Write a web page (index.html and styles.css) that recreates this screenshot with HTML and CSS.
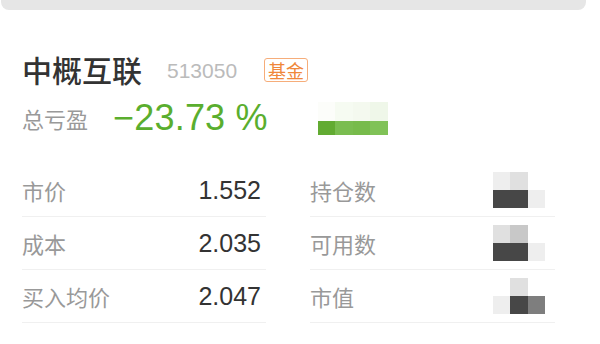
FILE: index.html
```html
<!DOCTYPE html>
<html lang="zh-CN">
  <head>
    <meta charset="UTF-8" />
    <meta name="viewport" content="width=device-width, initial-scale=1.0" />
    <title>中概互联 持仓</title>
    <link rel="stylesheet" href="styles.css">
  </head>
  <body>
    <div class="top-bar"></div>

    <div class="card">
      <!-- name, code and tag -->
      <div class="header">
        <span class="name">中概互联</span>
        <span class="code">513050</span>
        <span class="tag">基金</span>
      </div>

      <!-- total profit / loss -->
      <div class="profit">
        <span class="profit-label">总亏盈</span>
        <span class="profit-value">−23.73 %</span>
        <div class="mosaic green">
          <i class="g1"></i><i class="g2"></i><i class="g3"></i><i class="g4"></i>
          <i class="g5"></i><i class="g6"></i><i class="g7"></i><i class="g8"></i>
        </div>
      </div>

      <div class="table">
        <div class="column">
          <div class="row">
            <span class="label">市价</span>
            <span class="value">1.552</span>
          </div>
          <div class="row">
            <span class="label">成本</span>
            <span class="value">2.035</span>
          </div>
          <div class="row">
            <span class="label">买入均价</span>
            <span class="value">2.047</span>
          </div>
        </div>

        <div class="column">
          <div class="row">
            <span class="label">持仓数</span>
            <div class="mosaic gray">
              <i class="c1"></i><i class="c2"></i><i class="c0"></i>
              <i class="c9"></i><i class="c9"></i><i class="c1"></i>
            </div>
          </div>
          <div class="row">
            <span class="label">可用数</span>
            <div class="mosaic gray">
              <i class="c2"></i><i class="c3"></i><i class="c0"></i>
              <i class="c9"></i><i class="c9"></i><i class="c1"></i>
            </div>
          </div>
          <div class="row">
            <span class="label">市值</span>
            <div class="mosaic gray">
              <i class="c0"></i><i class="c2"></i><i class="c0"></i>
              <i class="c1"></i><i class="c9"></i><i class="c5"></i>
            </div>
          </div>
        </div>
      </div>
    </div>
  </body>
</html>
```

FILE: styles.css
```css
body {
  margin: 0;
  background: #fff;
  color: #333;
  font-family: "Liberation Sans", "Noto Sans CJK SC", sans-serif;
}

.top-bar {
  height: 10px;
  margin: 0 14px 0 1px;
  background: #e6e6e6;
  border-radius: 0 0 8px 8px;
}

.card {
  padding: 0 0 0 22px;
}

/* Header */
.header {
  display: flex;
  align-items: center;
  height: 36px;
  margin-top: 41px;
}

.name {
  font-family: "Noto Sans CJK SC", sans-serif;
  font-size: 30px;
  font-weight: 500;
  color: #333;
  line-height: 36px;
}

.code {
  margin-left: 25px;
  font-size: 21px;
  color: #bbb;
  position: relative;
  top: 2px;
}

.tag {
  margin-left: 27px;
  padding: 0 3px;
  height: 22px;
  line-height: 22px;
  border: 1px solid #f6ad7a;
  border-radius: 3px;
  color: #f0873a;
  font-family: "Noto Sans CJK SC", sans-serif;
  font-size: 18px;
  position: relative;
  top: 1px;
}

/* Profit */
.profit {
  display: flex;
  align-items: center;
  height: 36px;
  margin-top: 13px;
}

.profit-label {
  font-family: "Noto Sans CJK SC", sans-serif;
  font-size: 22px;
  color: #999;
}

.profit-value {
  margin-left: 25px;
  font-size: 36px;
  color: #5aae2e;
  letter-spacing: 0.2px;
}

.mosaic {
  display: grid;
}

.mosaic i {
  display: block;
}

.mosaic.green {
  margin-left: 50px;
  grid-template-columns: repeat(4, 17.5px);
  grid-template-rows: 19px 14px;
}

.g1 { background: #fcfdfa; }
.g2 { background: #f6fbf2; }
.g3 { background: #f4f9ef; }
.g4 { background: #eff7e9; }
.g5 { background: #62ab32; }
.g6 { background: #7abd50; }
.g7 { background: #77bb4b; }
.g8 { background: #80c257; }

/* Table */
.table {
  display: flex;
  gap: 44px;
  margin-top: 28px;
}

.column {
  width: 244px;
}

.column + .column {
  width: 245px;
}

.row {
  display: flex;
  align-items: center;
  justify-content: space-between;
  height: 52px;
  border-bottom: 1px solid #f0f0f0;
}

.label {
  font-family: "Noto Sans CJK SC", sans-serif;
  font-size: 22px;
  color: #999;
}

.value {
  font-size: 25px;
  color: #333;
  margin-right: 5px;
}

.mosaic.gray {
  margin-right: 10px;
  grid-template-columns: repeat(3, 17.5px);
  grid-template-rows: 18px 18px;
}

.c0 { background: #fff; }
.c1 { background: #eeeeee; }
.c2 { background: #e0e0e0; }
.c3 { background: #c8c8c8; }
.c5 { background: #7e7e7e; }
.c9 { background: #474747; }
```
